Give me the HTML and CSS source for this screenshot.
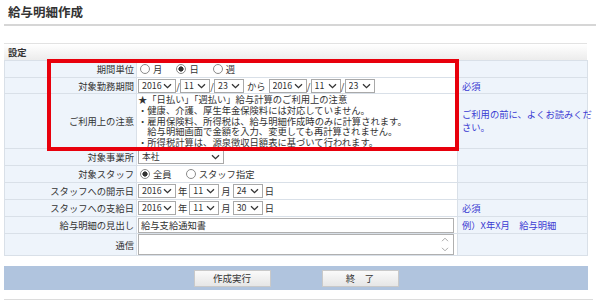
FILE: index.html
```html
<!DOCTYPE html>
<html lang="ja">
<head>
<meta charset="utf-8">
<title>給与明細作成</title>
<link rel="stylesheet" href="styles.css">
</head>
<body>
<div class="page">
  <h1 class="title">給与明細作成</h1>

  <div class="section">
    <div class="section-head">設定</div>
    <table class="form">
      <colgroup><col class="c-label"><col class="c-value"><col class="c-note"></colgroup>
      <tr class="r17">
        <th>期間単位</th>
        <td>
          <label class="radio"><input type="radio" name="unit">月</label>
          <label class="radio"><input type="radio" name="unit" checked>日</label>
          <label class="radio"><input type="radio" name="unit">週</label>
        </td>
        <td class="note"></td>
      </tr>
      <tr class="r16">
        <th>対象勤務期間</th>
        <td>
          <div class="inline">
            <select class="sel sel-y"><option>2016</option></select><span class="sep">/</span>
            <select class="sel sel-s"><option>11</option></select><span class="sep">/</span>
            <select class="sel sel-s"><option>23</option></select><span class="word">から</span>
            <select class="sel sel-y"><option>2016</option></select><span class="sep">/</span>
            <select class="sel sel-s"><option>11</option></select><span class="sep">/</span>
            <select class="sel sel-s"><option>23</option></select>
          </div>
        </td>
        <td class="note">必須</td>
      </tr>
      <tr class="r55">
        <th>ご利用上の注意</th>
        <td class="notice">
          ★「日払い」「週払い」給与計算のご利用上の注意<br>
          ・健康、介護、厚生年金保険料には対応していません。<br>
          ・雇用保険料、所得税は、給与明細作成時のみに計算されます。<br>
          　給与明細画面で金額を入力、変更しても再計算されません。<br>
          ・所得税計算は、源泉徴収日額表に基づいて行われます。
        </td>
        <td class="note note-multi">ご利用の前に、よくお読みくだ<br>さい。</td>
      </tr>
      <tr class="r17">
        <th>対象事業所</th>
        <td><select class="sel sel-office"><option>本社</option></select></td>
        <td class="note"></td>
      </tr>
      <tr class="r17">
        <th>対象スタッフ</th>
        <td>
          <label class="radio"><input type="radio" name="staff" checked>全員</label>
          <label class="radio"><input type="radio" name="staff">スタッフ指定</label>
        </td>
        <td class="note"></td>
      </tr>
      <tr class="r17">
        <th>スタッフへの開示日</th>
        <td>
          <div class="inline">
            <select class="sel sel-y"><option>2016</option></select><span class="unit">年</span>
            <select class="sel sel-s"><option>11</option></select><span class="unit">月</span>
            <select class="sel sel-s"><option>24</option></select><span class="unit">日</span>
          </div>
        </td>
        <td class="note"></td>
      </tr>
      <tr class="r17">
        <th>スタッフへの支給日</th>
        <td>
          <div class="inline">
            <select class="sel sel-y"><option>2016</option></select><span class="unit">年</span>
            <select class="sel sel-s"><option>11</option></select><span class="unit">月</span>
            <select class="sel sel-s"><option>30</option></select><span class="unit">日</span>
          </div>
        </td>
        <td class="note">必須</td>
      </tr>
      <tr class="r17">
        <th>給与明細の見出し</th>
        <td><input class="text" type="text" value="給与支給通知書"></td>
        <td class="note">例）X年X月　給与明細</td>
      </tr>
      <tr class="r22">
        <th>通信</th>
        <td>
          <div class="ta-wrap">
            <textarea class="ta"></textarea>
            <svg class="ta-arrow ta-up" width="8" height="5" viewBox="0 0 8 5"><path d="M1 4.2L4 1.2L7 4.2" fill="none" stroke="#a8a8a8" stroke-width="1"/></svg>
            <svg class="ta-arrow ta-down" width="8" height="5" viewBox="0 0 8 5"><path d="M1 0.8L4 3.8L7 0.8" fill="none" stroke="#a8a8a8" stroke-width="1"/></svg>
          </div>
        </td>
        <td class="note"></td>
      </tr>
    </table>
  </div>

  <div class="actions">
    <button class="btn" type="button">作成実行</button>
    <button class="btn" type="button">終　了</button>
  </div>
  <div class="footer-line"></div>

  <div class="highlight"></div>
</div>
</body>
</html>
```

FILE: styles.css
```css
html, body {
  margin: 0;
  padding: 0;
  background: #fff;
}

body {
  font-family: "Noto Sans CJK JP", "Noto Sans", sans-serif;
  font-size: 9.3px;
  color: #333;
}

.page {
  position: relative;
  width: 600px;
  height: 300px;
  overflow: hidden;
}

.title {
  margin: 0 4px;
  padding: 4px 4px 4px;
  font-size: 12.5px;
  line-height: 16px;
  font-weight: bold;
  color: #333;
  border-bottom: 2px solid #d6d6d6;
}

.section {
  margin: 17px 13px 0 4px;
}

.section-head {
  height: 16px;
  line-height: 16px;
  padding-left: 4px;
  border-top: 1px solid #e2e2e2;
  background: linear-gradient(#ffffff, #ececec);
  font-weight: bold;
  color: #333;
}

.form {
  width: 583px;
  border-collapse: collapse;
  table-layout: fixed;
}

.c-label { width: 132px; }
.c-value { width: 321px; }
.c-note { width: 130px; }

.form th,
.form td {
  border: 1px solid #d9e0e8;
  padding: 0;
  vertical-align: middle;
}

.form th {
  background: #eef4fb;
  font-weight: normal;
  text-align: right;
  padding-right: 2px;
  white-space: nowrap;
}

.form td {
  background: #fff;
  padding-left: 1px;
}

.form td.note {
  background: #eef4fb;
  color: #3a3ad2;
  padding-left: 4px;
  white-space: nowrap;
}

.r17 > * { height: 16px; }
.r16 > * { height: 15px; }
.r55 > * { height: 54px; }
.r22 > * { height: 21px; }

.notice {
  line-height: 10.8px;
  white-space: nowrap;
}

.note-multi {
  line-height: 13px;
}

.radio {
  display: inline-flex;
  align-items: center;
  margin-right: 10px;
  margin-left: 2px;
}

.radio input {
  appearance: none;
  -webkit-appearance: none;
  width: 10px;
  height: 10px;
  margin: 0 3px 0 0;
  border: 1px solid #8a8a8a;
  border-radius: 50%;
  background: #fff;
  box-sizing: border-box;
}

.radio input:checked {
  background: radial-gradient(circle, #333 0 2.3px, #fff 2.9px);
}

.inline {
  display: flex;
  align-items: center;
}

.sel {
  appearance: none;
  -webkit-appearance: none;
  height: 14px;
  box-sizing: border-box;
  margin: 0;
  padding: 0 0 0 3px;
  border: 1px solid #a9a9a9;
  border-radius: 0;
  font-family: inherit;
  font-size: 8.8px;
  line-height: 12px;
  color: #333;
  background: #fff url("data:image/svg+xml,%3Csvg xmlns='http://www.w3.org/2000/svg' width='9' height='6' viewBox='0 0 9 6'%3E%3Cpath d='M1 1.2L4.5 4.6L8 1.2' fill='none' stroke='%23333' stroke-width='1.3'/%3E%3C/svg%3E") no-repeat right 3px center;
  display: block;
}

.sel-y { width: 38px; }
.sel-s { width: 30px; }
.sel-office { width: 86px; }

.sep {
  width: 4px;
  text-align: center;
  color: #333;
}

.word {
  margin: 0 3px;
}

.unit {
  margin: 0 2px;
}

.text {
  display: block;
  width: 316px;
  height: 15px;
  box-sizing: border-box;
  margin: 0;
  padding: 0 2px;
  border: 1px solid #b0b0b0;
  font-family: inherit;
  font-size: 9.3px;
  color: #333;
}

.ta-wrap {
  position: relative;
  width: 316px;
  height: 21px;
}

.ta {
  display: block;
  width: 316px;
  height: 21px;
  box-sizing: border-box;
  margin: 0;
  padding: 1px 2px;
  border: 1px solid #b0b0b0;
  resize: none;
  overflow: hidden;
  font-family: inherit;
  font-size: 9.3px;
}

.ta-arrow {
  position: absolute;
  right: 5px;
}
.ta-up { top: 3px; }
.ta-down { bottom: 3px; }

.actions {
  margin: 10px 12px 0 4px;
  height: 24px;
  background: #b0c4de;
  display: flex;
  justify-content: center;
  align-items: center;
  gap: 51px;
}

.btn {
  width: 77px;
  height: 17px;
  padding: 0;
  border: 1px solid #c9c9c9;
  background: linear-gradient(#fafafa, #e6e6e6);
  font-family: inherit;
  font-size: 9.5px;
  color: #333;
}

.footer-line {
  margin: 9px 7px 0 4px;
  border-top: 1px solid #dcdcdc;
}

.highlight {
  position: absolute;
  left: 47px;
  top: 59px;
  width: 412px;
  height: 92px;
  box-sizing: border-box;
  border: 4px solid #e8000c;
  pointer-events: none;
}
```
